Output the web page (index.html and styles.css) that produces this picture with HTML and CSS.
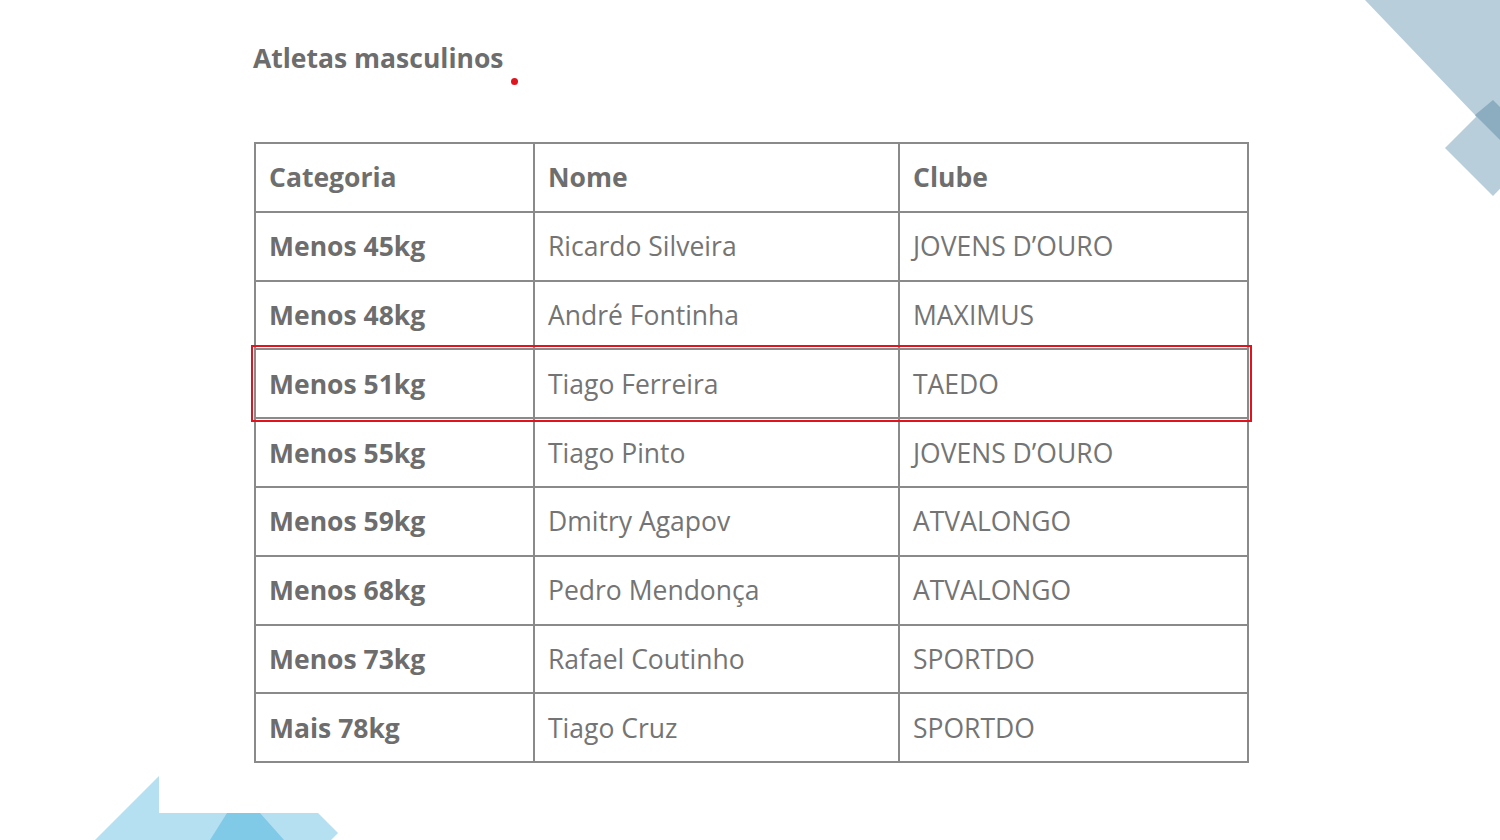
FILE: index.html
```html
<!DOCTYPE html>
<html lang="pt">
<head>
<meta charset="utf-8">
<link rel="stylesheet" href="styles.css">
</head>
<body>
<div class="page">
  <svg class="deco deco-tr" width="160" height="200" viewBox="0 0 160 200">
    <polygon points="25,0 200,0 200,240 135,115" fill="#b8ceda"/>
    <polygon points="105,148 153,100 200,148 153,196" fill="#b8ceda"/>
    <polygon points="135,115 153,100 160,107 160,140" fill="#8badbf"/>
  </svg>
  <svg class="deco deco-bl" width="280" height="80" viewBox="0 0 280 80">
    <polygon points="15,80 79,16 79,53 238,53 258,73 251,80" fill="#b4e0f1"/>
    <polygon points="147,53 180,53 204,80 130,80" fill="#80c9e7"/>
  </svg>
  <h2 class="title">Atletas masculinos<span class="dot"></span></h2>
  <table class="results">
    <colgroup>
      <col class="c1"><col class="c2"><col class="c3">
    </colgroup>
    <thead>
      <tr><th>Categoria</th><th>Nome</th><th>Clube</th></tr>
    </thead>
    <tbody>
      <tr><td class="cat">Menos 45kg</td><td>Ricardo Silveira</td><td>JOVENS D’OURO</td></tr>
      <tr><td class="cat">Menos 48kg</td><td>André Fontinha</td><td>MAXIMUS</td></tr>
      <tr class="hl"><td class="cat">Menos 51kg</td><td>Tiago Ferreira</td><td>TAEDO</td></tr>
      <tr><td class="cat">Menos 55kg</td><td>Tiago Pinto</td><td>JOVENS D’OURO</td></tr>
      <tr><td class="cat">Menos 59kg</td><td>Dmitry Agapov</td><td>ATVALONGO</td></tr>
      <tr><td class="cat">Menos 68kg</td><td>Pedro Mendonça</td><td>ATVALONGO</td></tr>
      <tr><td class="cat">Menos 73kg</td><td>Rafael Coutinho</td><td>SPORTDO</td></tr>
      <tr><td class="cat">Mais 78kg</td><td>Tiago Cruz</td><td>SPORTDO</td></tr>
    </tbody>
  </table>
</div>
</body>
</html>
```
FILE: styles.css
```css
html, body {
  margin: 0;
  padding: 0;
  background: #ffffff;
}
.page {
  position: relative;
  width: 1500px;
  height: 840px;
  overflow: hidden;
  font-family: "Open Sans", "Noto Sans", sans-serif;
  color: #6b6b6b;
  padding: 41px 0 0 253px;
  box-sizing: border-box;
}
.deco {
  position: absolute;
  display: block;
}
.deco-tr {
  right: 0;
  top: 0;
}
.deco-bl {
  left: 80px;
  bottom: 0;
}
.title {
  position: relative;
  margin: 0;
  font-size: 26.5px;
  line-height: 34px;
  font-weight: 700;
  color: #6d6d6d;
  letter-spacing: 0;
}
.dot {
  position: absolute;
  left: 258px;
  top: 37px;
  width: 7px;
  height: 7px;
  border-radius: 50%;
  background: #e0141e;
}
.results {
  margin-top: 67px;
  margin-left: 1px;
  width: 993px;
  border-collapse: collapse;
  table-layout: fixed;
  border: 2px solid #8a8a8a;
}
.c1 { width: 279px; }
.c2 { width: 365px; }
.c3 { width: 349px; }
.results th,
.results td {
  border: 2px solid #8a8a8a;
  height: 68.8px;
  padding: 0 0 0 13px;
  text-align: left;
  font-size: 26.5px;
  line-height: 34px;
  color: #6e6e6e;
  vertical-align: middle;
  box-sizing: border-box;
}
.results th {
  font-weight: 700;
}
.results td {
  font-weight: 400;
  color: #747474;
}
.results td.cat {
  font-weight: 700;
  color: #6d6d6d;
}
.results tr.hl {
  outline: 2px solid #e0141e;
  outline-offset: 2px;
}
```
